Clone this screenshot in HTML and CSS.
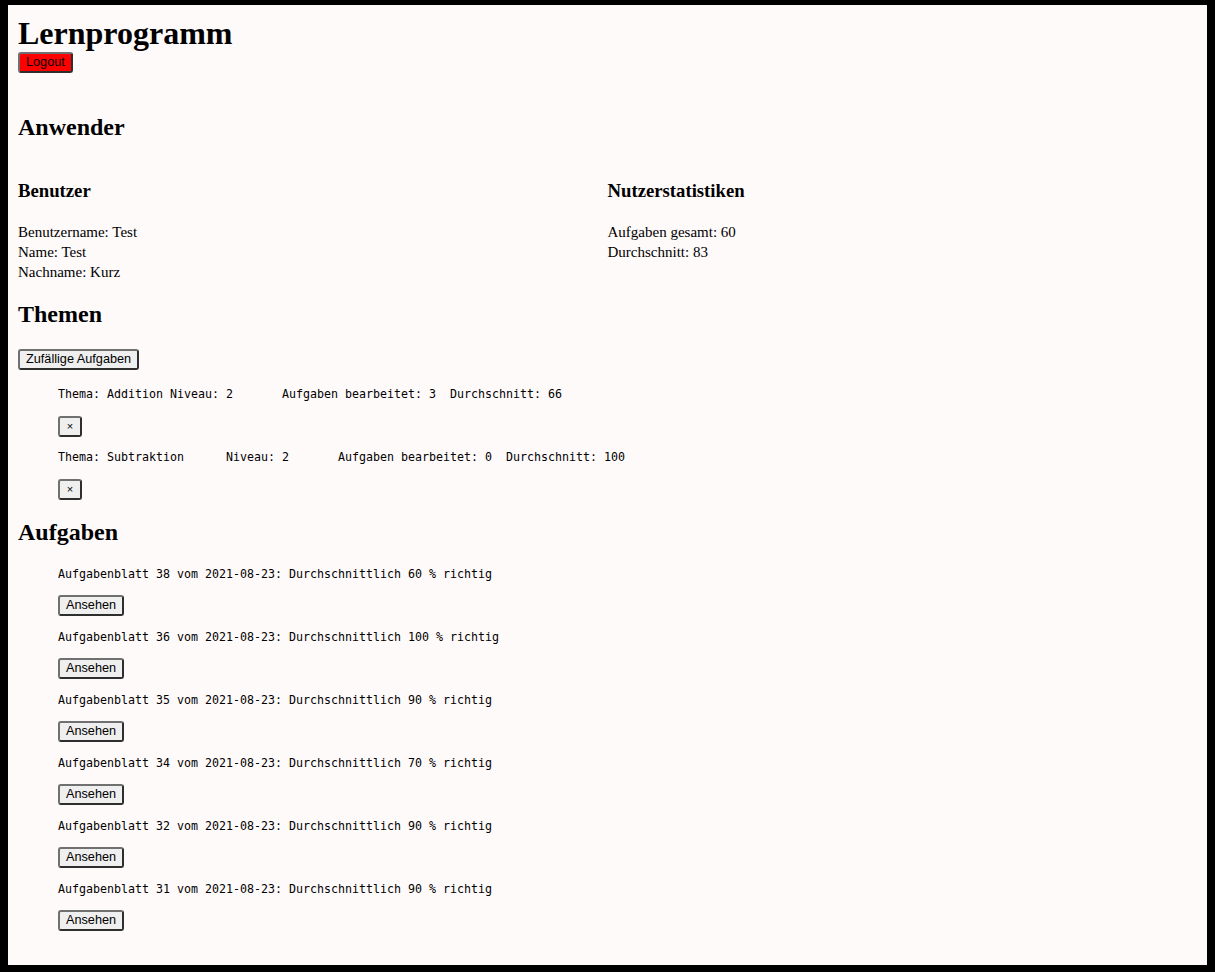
FILE: index.html
```html
<!DOCTYPE html>
<html lang="de">
<head>
<meta charset="utf-8">
<title>Lernprogramm</title>
<link rel="stylesheet" href="styles.css">
</head>
<body>
<div class="page">
  <h1 class="title">Lernprogramm</h1>
  <button class="btn btn-logout">Logout</button>

  <h2 class="h2 h2-anwender">Anwender</h2>
  <div class="cols">
    <div class="col">
      <h3 class="h3">Benutzer</h3>
      <div class="lines">
        <div>Benutzername: Test</div>
        <div>Name: Test</div>
        <div>Nachname: Kurz</div>
      </div>
    </div>
    <div class="col">
      <h3 class="h3">Nutzerstatistiken</h3>
      <div class="lines">
        <div>Aufgaben gesamt: 60</div>
        <div>Durchschnitt: 83</div>
      </div>
    </div>
  </div>

  <h2 class="h2 h2-themen">Themen</h2>
  <button class="btn btn-random">Zufällige Aufgaben</button>
  <div class="list list-themen">
    <div class="item">
      <pre class="mono">Thema: Addition	Niveau: 2	Aufgaben bearbeitet: 3	Durchschnitt: 66</pre>
      <button class="btn btn-x">×</button>
    </div>
    <div class="item">
      <pre class="mono">Thema: Subtraktion	Niveau: 2	Aufgaben bearbeitet: 0	Durchschnitt: 100</pre>
      <button class="btn btn-x">×</button>
    </div>
  </div>

  <h2 class="h2 h2-aufgaben">Aufgaben</h2>
  <div class="list list-aufgaben">
    <div class="item">
      <pre class="mono">Aufgabenblatt 38 vom 2021-08-23: Durchschnittlich 60 % richtig</pre>
      <button class="btn">Ansehen</button>
    </div>
    <div class="item">
      <pre class="mono">Aufgabenblatt 36 vom 2021-08-23: Durchschnittlich 100 % richtig</pre>
      <button class="btn">Ansehen</button>
    </div>
    <div class="item">
      <pre class="mono">Aufgabenblatt 35 vom 2021-08-23: Durchschnittlich 90 % richtig</pre>
      <button class="btn">Ansehen</button>
    </div>
    <div class="item">
      <pre class="mono">Aufgabenblatt 34 vom 2021-08-23: Durchschnittlich 70 % richtig</pre>
      <button class="btn">Ansehen</button>
    </div>
    <div class="item">
      <pre class="mono">Aufgabenblatt 32 vom 2021-08-23: Durchschnittlich 90 % richtig</pre>
      <button class="btn">Ansehen</button>
    </div>
    <div class="item">
      <pre class="mono">Aufgabenblatt 31 vom 2021-08-23: Durchschnittlich 90 % richtig</pre>
      <button class="btn">Ansehen</button>
    </div>
  </div>
</div>
</body>
</html>
```

FILE: styles.css
```css
html, body {
  margin: 0;
  padding: 0;
}
body {
  background: #000;
  padding: 5px 8px 7px 8px;
  font-family: "Liberation Serif", "Times New Roman", serif;
  font-size: 16px;
  color: #000;
}
.page {
  background: #fffafa;
  min-height: calc(100vh - 12px);
  box-sizing: border-box;
  padding: 0 10px;
  display: flex;
  flex-direction: column;
  align-items: flex-start;
}
.title {
  margin: 10px 0 0 0;
  font-size: 32px;
  line-height: 37px;
  font-weight: bold;
}
.btn {
  font-family: "Liberation Sans", Arial, sans-serif;
  font-size: 12.7px;
  line-height: 15px;
  height: 21px;
  padding: 1px 6px;
  margin: 0;
  color: #000;
  background: #efefef;
  border: 2px solid;
  border-color: #707070 #2e2e2e #2e2e2e #707070;
  border-radius: 3px;
  box-sizing: border-box;
  display: block;
}
.btn-logout {
  background: #ff0000;
}
.h2 {
  font-size: 24px;
  line-height: 28px;
  font-weight: bold;
  margin: 0;
}
.h2-anwender { margin-top: 40px; }
.h2-themen { margin-top: 18px; }
.h2-aufgaben { margin-top: 18px; }
.cols {
  align-self: stretch;
  display: grid;
  grid-template-columns: 1fr 1fr;
  margin-top: 39px;
}
.h3 {
  font-size: 18.72px;
  line-height: 22px;
  font-weight: bold;
  margin: 0 0 20px 0;
}
.lines {
  font-size: 15px;
  line-height: 20px;
}
.btn-random {
  margin-top: 21px;
}
.list {
  display: flex;
  flex-direction: column;
  align-items: flex-start;
  padding-left: 40px;
}
.list-themen {
  margin-top: 16px;
  gap: 12px;
}
.list-aufgaben {
  margin-top: 20px;
  gap: 13px;
}
.item {
  display: flex;
  flex-direction: column;
  align-items: flex-start;
  gap: 14px;
}
.list-aufgaben .item {
  gap: 13px;
}
.mono {
  margin: 0;
  font-family: "DejaVu Sans Mono", Consolas, monospace;
  font-size: 11.63px;
  line-height: 16px;
  tab-size: 8;
}
.btn-x {
  width: 24px;
  padding: 0;
  font-size: 11px;
  text-align: center;
}
```
